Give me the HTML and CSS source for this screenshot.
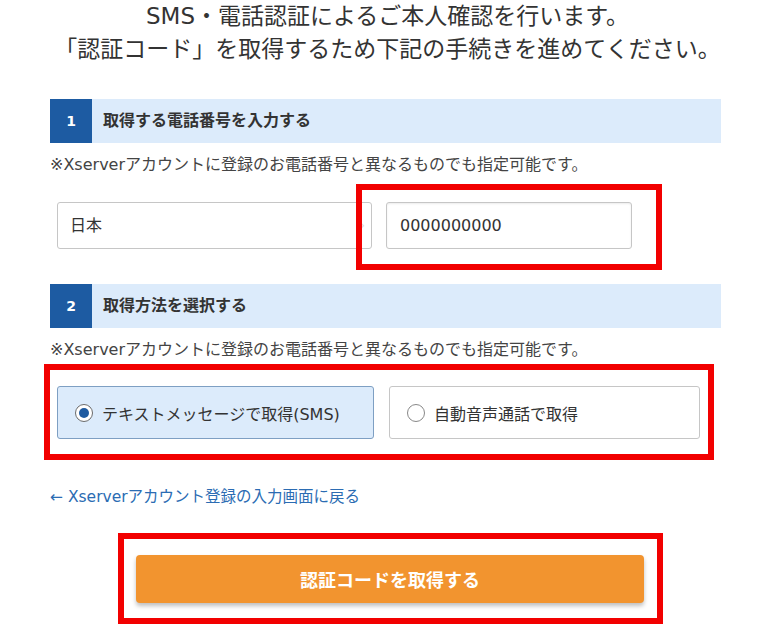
FILE: index.html
```html
<!DOCTYPE html>
<html lang="ja">
<head>
    <meta charset="UTF-8">
    <title>SMS・電話認証</title>
    <link rel="stylesheet" href="styles.css">
</head>
<body>
    <h1 class="lead">
        SMS・電話認証によるご本人確認を行います。<br>
        「認証コード」を取得するため下記の手続きを進めてください。
    </h1>

    <div class="form">
        <!-- Step 1 -->
        <div class="step-head">
            <span class="step-num">1</span>
            <span class="step-title">取得する電話番号を入力する</span>
        </div>
        <p class="note">※Xserverアカウントに登録のお電話番号と異なるものでも指定可能です。</p>
        <div class="phone-row">
            <div class="select-box">
                <span>日本</span>
                <span class="select-arrow">›</span>
            </div>
            <div class="phone-input marked mark-phone">0000000000</div>
        </div>

        <!-- Step 2 -->
        <div class="step-head step-two">
            <span class="step-num">2</span>
            <span class="step-title">取得方法を選択する</span>
        </div>
        <p class="note">※Xserverアカウントに登録のお電話番号と異なるものでも指定可能です。</p>
        <div class="method-row marked mark-method">
            <label class="method selected">
                <span class="radio"></span>
                テキストメッセージで取得(SMS)
            </label>
            <label class="method other">
                <span class="radio"></span>
                自動音声通話で取得
            </label>
        </div>

        <a class="back-link" href="#">← Xserverアカウント登録の入力画面に戻る</a>

        <button class="submit marked mark-submit">認証コードを取得する</button>
    </div>
</body>
</html>
```

FILE: styles.css
```css
body {
    margin: 0;
    padding-bottom: 40px;
    background-color: #fff;
    color: #333;
    font-family: "DejaVu Sans", "Noto Sans CJK JP", sans-serif;
}
.lead {
    margin: 0;
    font-size: 23px;
    font-weight: normal;
    line-height: 33px;
    text-align: center;
    color: #333;
}
.form {
    padding: 0 54px 0 50px;
}
.step-head {
    display: flex;
    height: 44px;
    margin-top: 33px;
    background-color: #dcebfb;
}
.step-two {
    margin-top: 35px;
}
.step-num {
    width: 42px;
    background-color: #1d5ba2;
    color: white;
    font-size: 14px;
    font-weight: bold;
    line-height: 44px;
    text-align: center;
}
.step-title {
    padding-left: 11px;
    font-size: 16px;
    font-weight: bold;
    line-height: 44px;
    color: #333;
}
.note {
    margin: 11px 0 0;
    font-size: 16px;
    line-height: 22px;
    color: #444;
}
.phone-row {
    display: flex;
    gap: 14px;
    margin-top: 26px;
    padding-left: 7px;
}
.select-box,
.phone-input {
    box-sizing: border-box;
    height: 47px;
    border: 1px solid #c6c6c6;
    border-radius: 3px;
    font-size: 16px;
    line-height: 45px;
    color: #333;
}
.select-box {
    display: flex;
    justify-content: space-between;
    width: 315px;
    padding: 0 6px 0 12px;
}
.select-arrow {
    color: #ddd;
    font-size: 14px;
}
.phone-input {
    width: 246px;
    padding-left: 13px;
    box-shadow: inset 0 1px 2px rgba(0, 0, 0, 0.08);
}
.method-row {
    display: flex;
    gap: 15px;
    margin-top: 25px;
    padding-left: 7px;
}
.method {
    box-sizing: border-box;
    display: flex;
    align-items: center;
    gap: 9px;
    height: 53px;
    padding-left: 17px;
    border: 1px solid #c6c6c6;
    border-radius: 3px;
    font-size: 16px;
    color: #333;
}
.method.selected {
    width: 317px;
    background-color: #dcebfb;
    border-color: #7e9fc3;
}
.method.other {
    width: 311px;
    background-color: #fff;
}
.radio {
    box-sizing: border-box;
    display: flex;
    align-items: center;
    justify-content: center;
    width: 18px;
    height: 18px;
    border: 1px solid #888;
    border-radius: 50%;
    background-color: #fff;
}
.selected .radio {
    border: 1.5px solid #6b6b6b;
}
.selected .radio::after {
    content: "";
    width: 10px;
    height: 10px;
    border-radius: 50%;
    background-color: #1e5aa0;
}
.back-link {
    display: block;
    margin-top: 47px;
    font-size: 15.5px;
    line-height: 22px;
    color: #2b6cb3;
    text-decoration: none;
}
.submit {
    display: block;
    width: 508px;
    height: 48px;
    margin: 47px 0 0 86px;
    border: none;
    border-radius: 4px;
    background-color: #f2942f;
    box-shadow: 0 3px 4px rgba(0, 0, 0, 0.25);
    color: white;
    font-family: inherit;
    font-size: 18px;
    font-weight: bold;
}
/* Red annotation frames */
.marked {
    position: relative;
}
.marked::after {
    content: "";
    position: absolute;
    border: 6px solid #f20000;
    pointer-events: none;
}
.mark-phone::after {
    top: -19px;
    right: -31px;
    bottom: -22px;
    left: -31px;
}
.mark-method::after {
    top: -22px;
    right: 7px;
    bottom: -21px;
    left: -6px;
}
.mark-submit::after {
    top: -22px;
    right: -19px;
    bottom: -21px;
    left: -18px;
}
```
